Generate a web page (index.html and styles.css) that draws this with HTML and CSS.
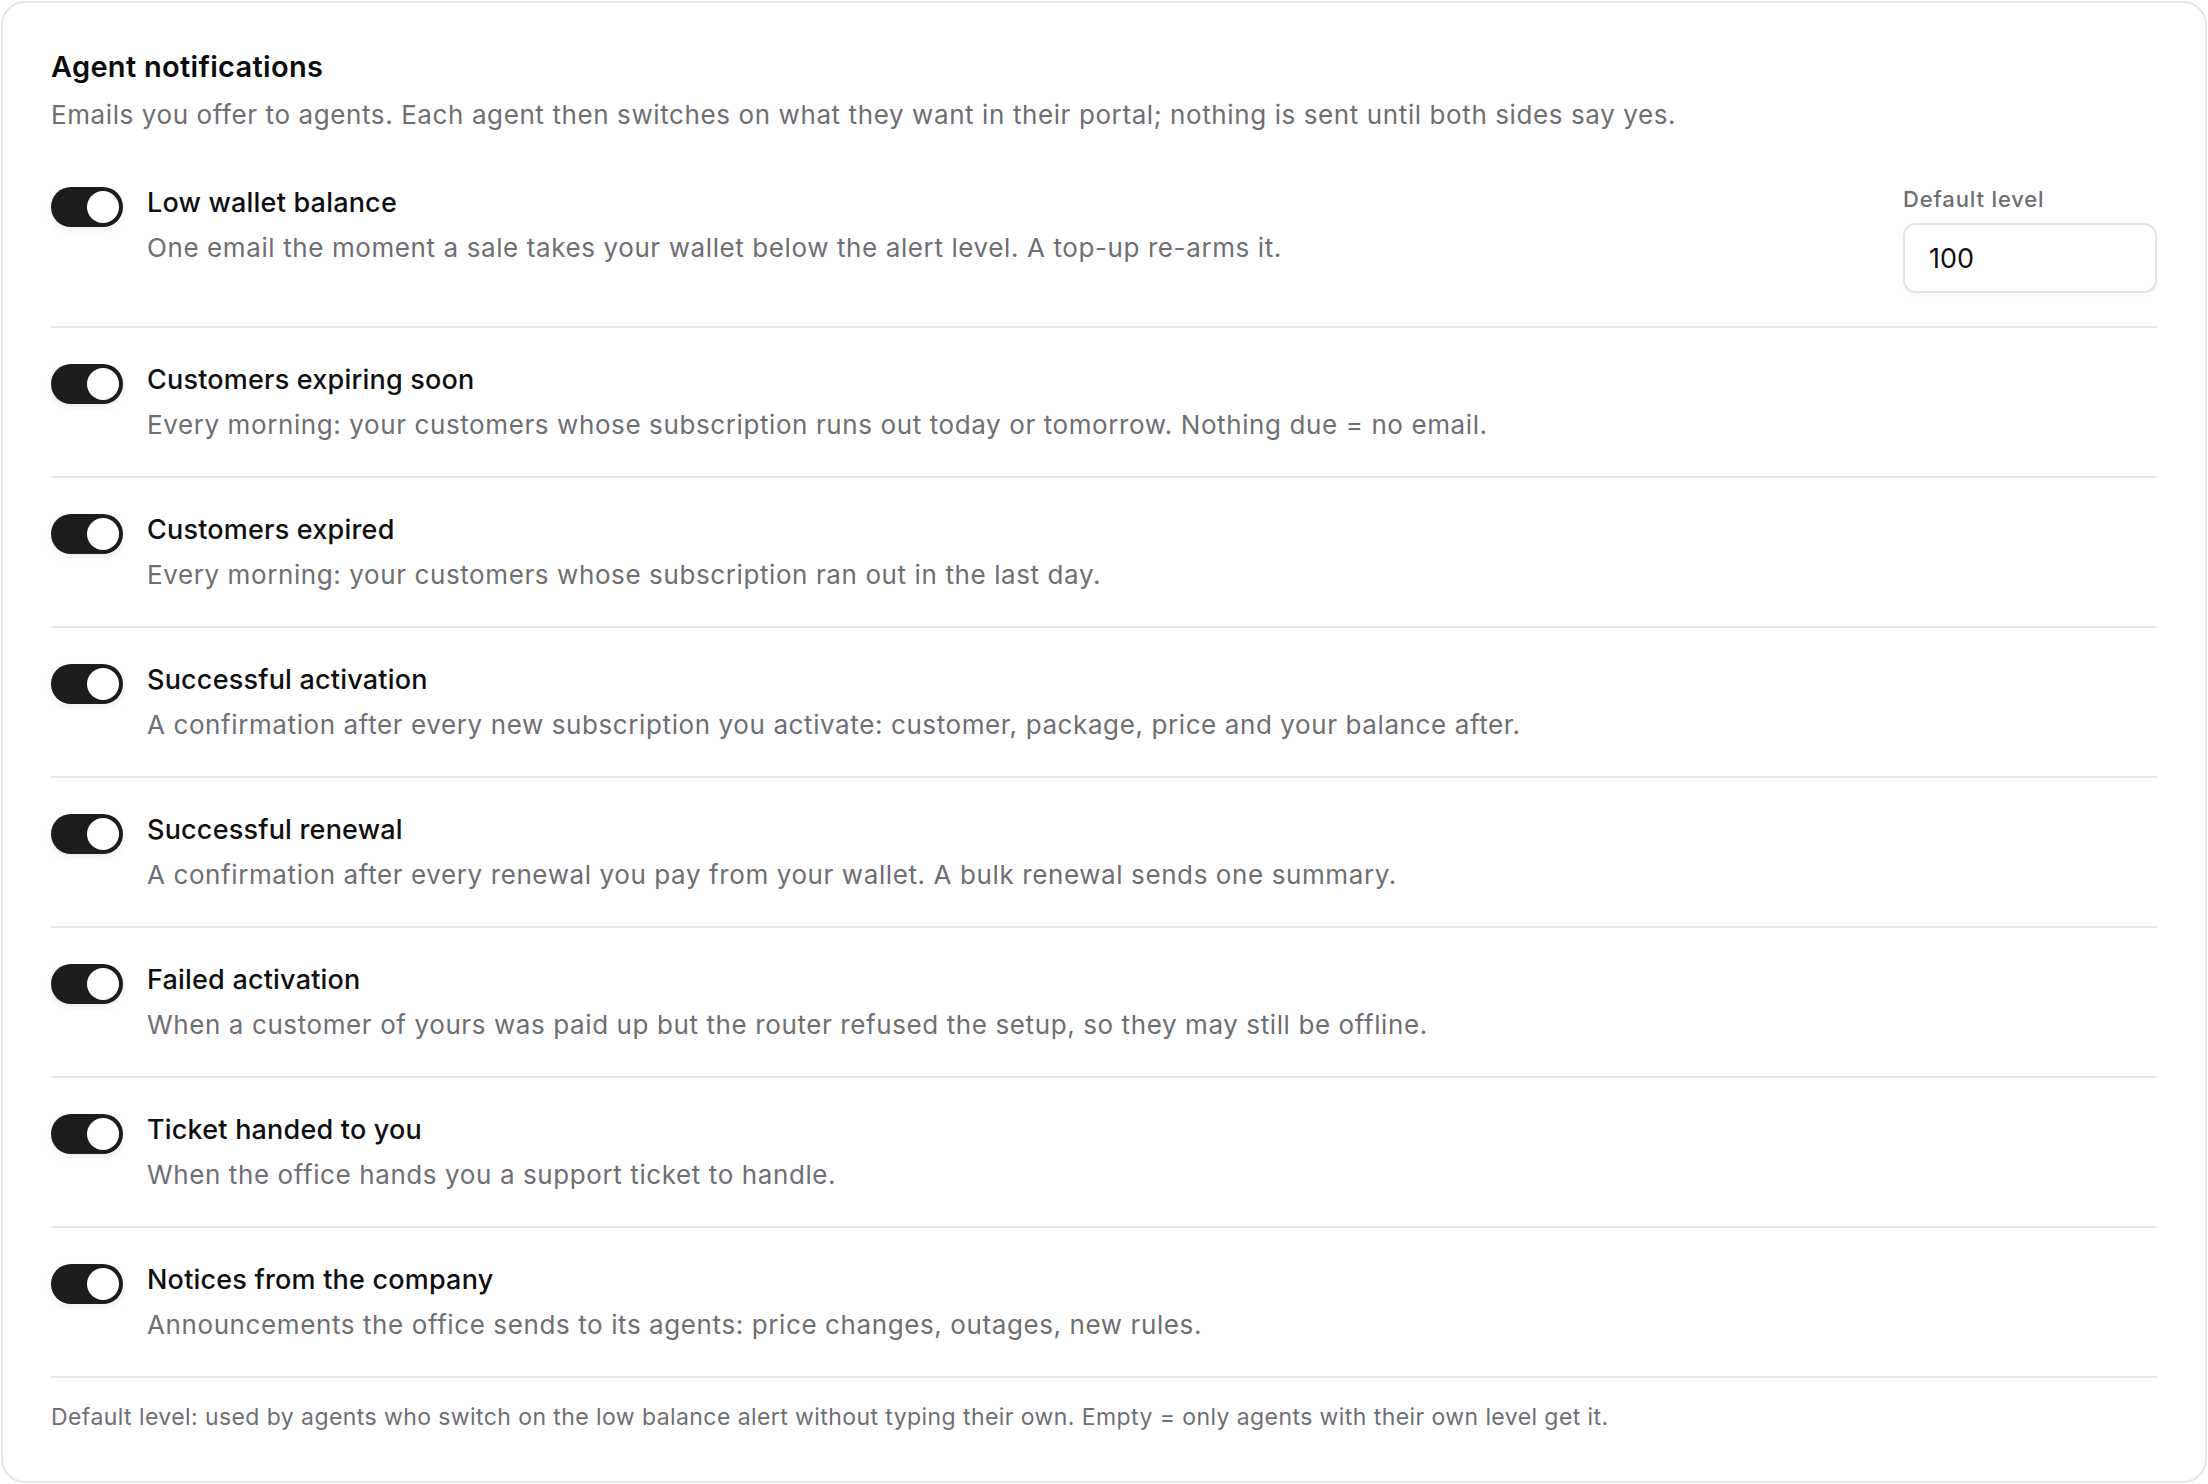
FILE: index.html
```html
<!DOCTYPE html>
<html lang="en">
<head>
<meta charset="utf-8">
<title>Agent notifications</title>
<link rel="stylesheet" href="styles.css">
</head>
<body>
<section class="card">
  <h2 class="heading">Agent notifications</h2>
  <p class="intro">Emails you offer to agents. Each agent then switches on what they want in their portal; nothing is sent until both sides say yes.</p>

  <div class="row">
    <span class="switch"><span class="knob"></span></span>
    <div class="text">
      <div class="name">Low wallet balance</div>
      <div class="desc">One email the moment a sale takes your wallet below the alert level. A top-up re-arms it.</div>
    </div>
    <label class="level">
      <span class="level-label">Default level</span>
      <input class="level-input" type="text" value="100">
    </label>
  </div>

  <div class="row">
    <span class="switch"><span class="knob"></span></span>
    <div class="text">
      <div class="name">Customers expiring soon</div>
      <div class="desc">Every morning: your customers whose subscription runs out today or tomorrow. Nothing due = no email.</div>
    </div>
  </div>

  <div class="row">
    <span class="switch"><span class="knob"></span></span>
    <div class="text">
      <div class="name">Customers expired</div>
      <div class="desc">Every morning: your customers whose subscription ran out in the last day.</div>
    </div>
  </div>

  <div class="row">
    <span class="switch"><span class="knob"></span></span>
    <div class="text">
      <div class="name">Successful activation</div>
      <div class="desc">A confirmation after every new subscription you activate: customer, package, price and your balance after.</div>
    </div>
  </div>

  <div class="row">
    <span class="switch"><span class="knob"></span></span>
    <div class="text">
      <div class="name">Successful renewal</div>
      <div class="desc">A confirmation after every renewal you pay from your wallet. A bulk renewal sends one summary.</div>
    </div>
  </div>

  <div class="row">
    <span class="switch"><span class="knob"></span></span>
    <div class="text">
      <div class="name">Failed activation</div>
      <div class="desc">When a customer of yours was paid up but the router refused the setup, so they may still be offline.</div>
    </div>
  </div>

  <div class="row">
    <span class="switch"><span class="knob"></span></span>
    <div class="text">
      <div class="name">Ticket handed to you</div>
      <div class="desc">When the office hands you a support ticket to handle.</div>
    </div>
  </div>

  <div class="row">
    <span class="switch"><span class="knob"></span></span>
    <div class="text">
      <div class="name">Notices from the company</div>
      <div class="desc">Announcements the office sends to its agents: price changes, outages, new rules.</div>
    </div>
  </div>

  <p class="footnote">Default level: used by agents who switch on the low balance alert without typing their own. Empty = only agents with their own level get it.</p>
</section>
</body>
</html>
```

FILE: styles.css
```css
* { box-sizing: border-box; }

html, body {
  margin: 0;
  background: #ffffff;
}

body {
  padding: 1px;
  font-family: Inter, "Noto Sans", "Liberation Sans", sans-serif;
  color: #111113;
}

.card {
  border: 2px solid #e6e6e8;
  border-radius: 24px;
  padding: 46px 48px 48px;
  min-height: 1482px;
  background: #fff;
}

.heading {
  margin: 0;
  font-size: 29px;
  line-height: 36px;
  font-weight: 600;
  letter-spacing: 0.3px;
  color: #0c0c0e;
}

.intro {
  margin: 12px 0 18px;
  font-size: 26px;
  line-height: 36px;
  color: #6e6e73;
  letter-spacing: 0.6px;
}

.row {
  display: flex;
  align-items: flex-start;
  gap: 24px;
  padding: 36px 0 33px;
  border-bottom: 2px solid #e6e6e8;
}

.switch {
  flex: none;
  position: relative;
  width: 72px;
  height: 40px;
  border-radius: 20px;
  background: #1c1c1e;
  box-shadow: 0 3px 6px rgba(0, 0, 0, 0.08);
}

.knob {
  position: absolute;
  top: 4px;
  right: 4px;
  width: 32px;
  height: 32px;
  border-radius: 50%;
  background: #ffffff;
}

.text {
  flex: 1;
  min-width: 0;
}

.name {
  font-size: 27px;
  line-height: 32px;
  font-weight: 500;
  letter-spacing: 0.2px;
  color: #0f0f11;
}

.desc {
  margin-top: 11px;
  font-size: 26px;
  line-height: 36px;
  color: #6e6e73;
  letter-spacing: 0.6px;
}

.level {
  flex: none;
  display: flex;
  flex-direction: column;
  gap: 12px;
  width: 254px;
}

.level-label {
  font-size: 22px;
  line-height: 24px;
  font-weight: 500;
  letter-spacing: 0.85px;
  color: #6e6e73;
}

.level-input {
  width: 254px;
  height: 70px;
  border: 2px solid #e3e3e6;
  border-radius: 13px;
  padding: 0 24px;
  font-family: inherit;
  font-size: 27px;
  color: #111113;
  background: #fff;
  box-shadow: 0 2px 4px rgba(0, 0, 0, 0.04);
  outline: none;
}

.footnote {
  margin: 24px 0 0;
  font-size: 23px;
  line-height: 30px;
  letter-spacing: 0.42px;
  color: #6e6e73;
}
```
